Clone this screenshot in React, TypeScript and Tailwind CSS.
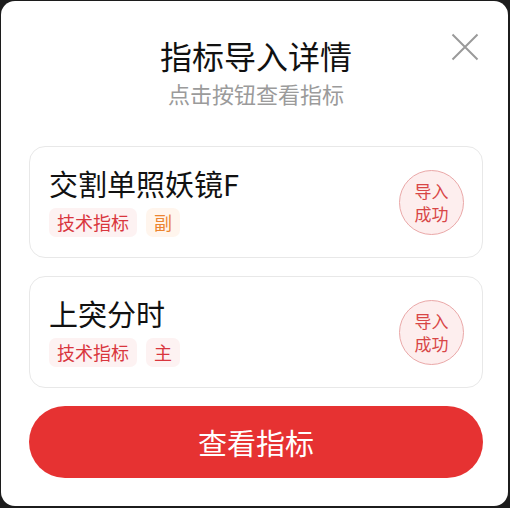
type Tag = { label: string; tone: "red" | "orange" };

interface Indicator {
  name: string;
  tags: Tag[];
}

const indicators: Indicator[] = [
  {
    name: "交割单照妖镜F",
    tags: [
      { label: "技术指标", tone: "red" },
      { label: "副", tone: "orange" },
    ],
  },
  {
    name: "上突分时",
    tags: [
      { label: "技术指标", tone: "red" },
      { label: "主", tone: "red" },
    ],
  },
];

function TagChip({ tag }: { tag: Tag }) {
  const tone =
    tag.tone === "orange"
      ? "bg-[#fff5ed] text-[#ec8430]"
      : "bg-[#fdf2f2] text-[#d9363e]";
  return (
    <span className={`h-[29px] px-[8px] rounded-[7px] text-[18px] leading-[29px] ${tone}`}>
      {tag.label}
    </span>
  );
}

function IndicatorCard({ item }: { item: Indicator }) {
  return (
    <div className="h-[112px] border border-[#e8e8e8] rounded-[16px] pl-[19px] pr-[18px] flex items-center justify-between">
      <div className="flex flex-col mb-[3px]">
        <div className="text-[29px] leading-[36px] text-[#111]">{item.name}</div>
        <div className="flex gap-[9px] mt-[7px]">
          {item.tags.map((t) => (
            <TagChip key={t.label} tag={t} />
          ))}
        </div>
      </div>
      {/* import status stamp */}
      <div className="w-[65px] h-[65px] rounded-full border border-[#eaa8a8] bg-[#fdeeee] text-[#d84646] text-[17px] leading-[23px] flex flex-col items-center justify-center">
        <span>导入</span>
        <span>成功</span>
      </div>
    </div>
  );
}

export default function App() {
  return (
    <div
      className="w-[510px] h-[508px] bg-[#1c1c1c] p-px"
      style={{ fontFamily: '"Noto Sans CJK SC", "Noto Sans", sans-serif' }}
    >
      <div className="relative w-[507px] h-[505px] bg-white rounded-[14px] pl-[28px] pr-[25px] pt-[33px]">
        <button className="absolute right-[29px] top-[32px]">
          <svg width="28" height="28" viewBox="0 0 28 28" fill="none" stroke="#9a9a9a" strokeWidth="2">
            <path d="M1.5 1.5L26.5 26.5M26.5 1.5L1.5 26.5" />
          </svg>
        </button>

        <div className="flex flex-col items-center">
          <h1 className="text-[32px] leading-[42px] text-[#111]">指标导入详情</h1>
          <p className="mt-[2px] text-[22px] leading-[30px] text-[#9b9b9b]">点击按钮查看指标</p>
        </div>

        <div className="mt-[38px] flex flex-col gap-[18px]">
          {indicators.map((item) => (
            <IndicatorCard key={item.name} item={item} />
          ))}
        </div>

        <button className="mt-[18px] w-full h-[72px] rounded-full bg-[#e63232] text-white text-[29px] leading-[72px]">
          查看指标
        </button>
      </div>
    </div>
  );
}
